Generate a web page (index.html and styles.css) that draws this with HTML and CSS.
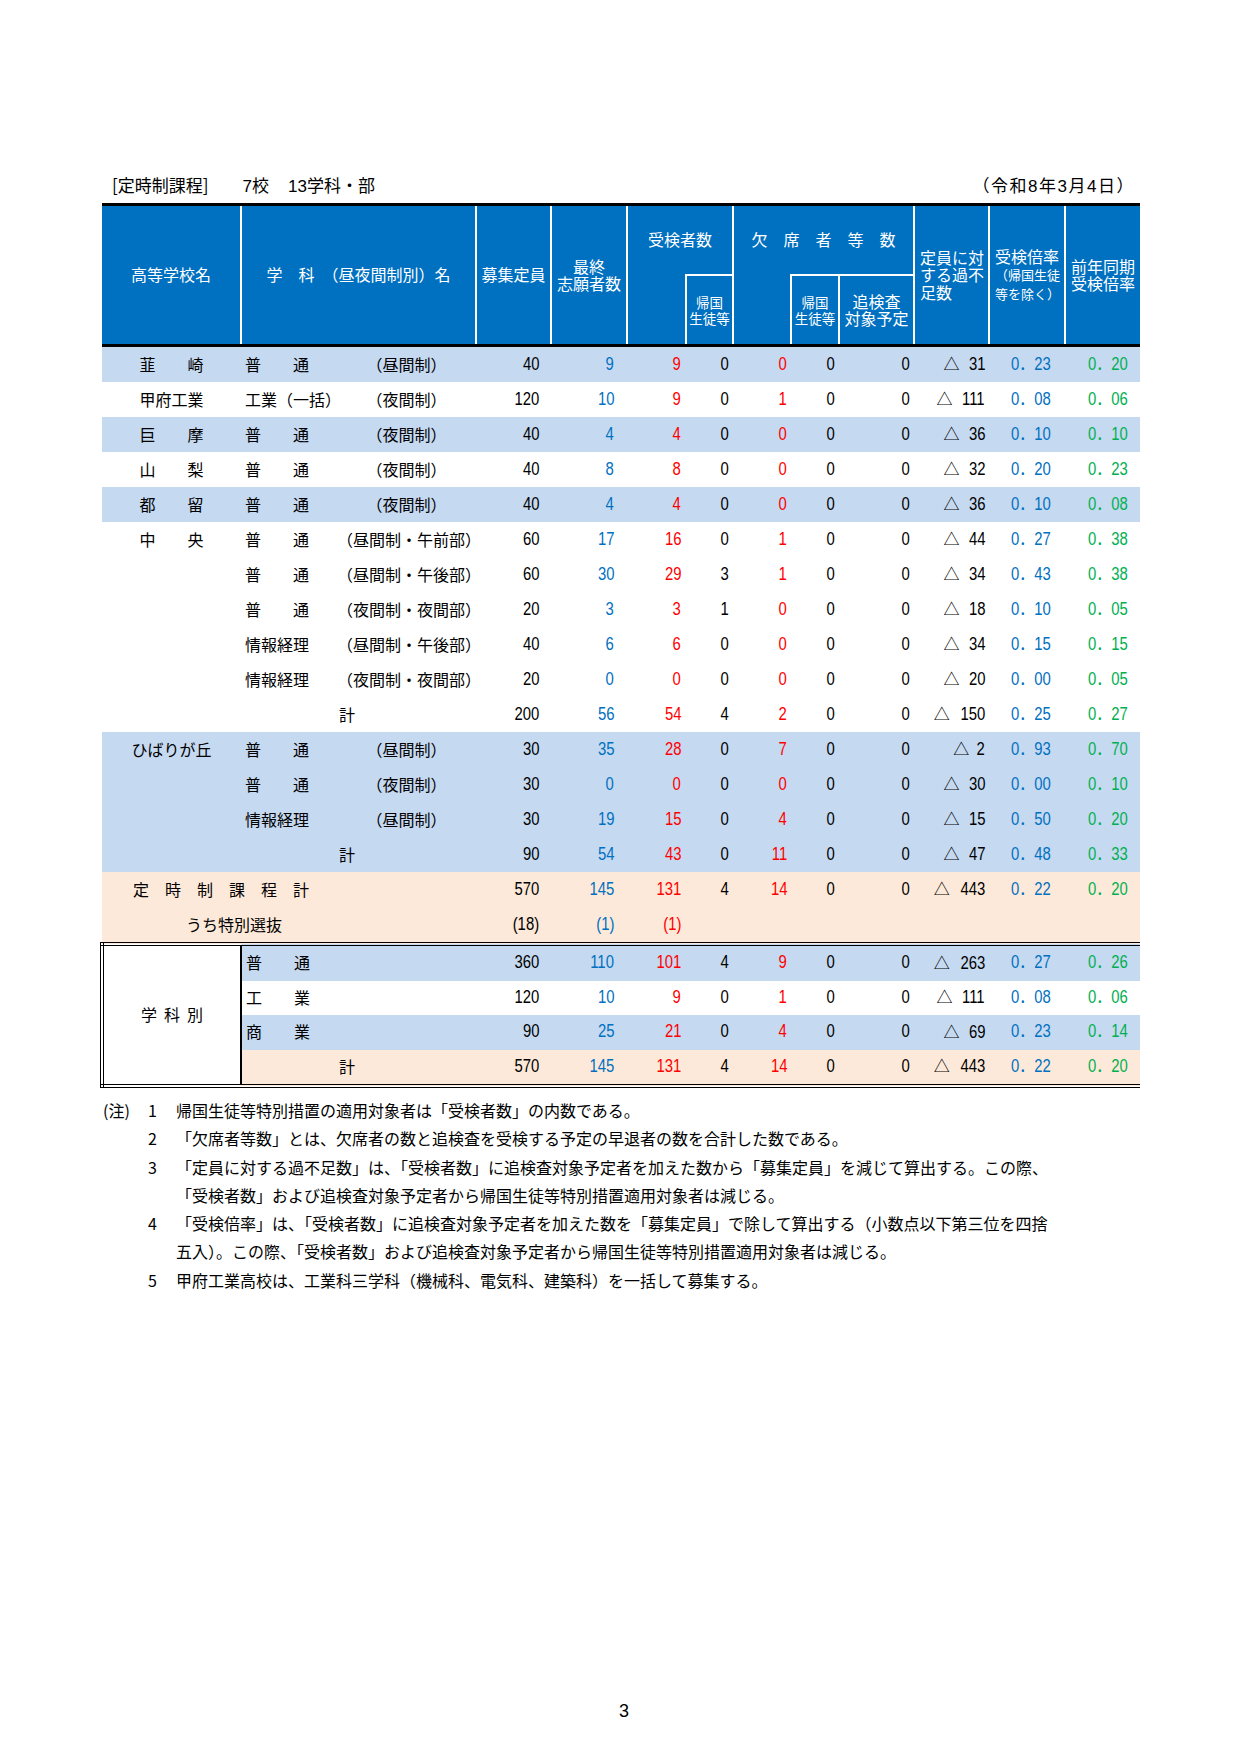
FILE: index.html
```html
<!DOCTYPE html>
<html lang="ja">
<head>
<meta charset="utf-8">
<title>定時制課程 受検状況</title>
<link rel="stylesheet" href="styles.css">
</head>
<body>
<div class="page">
  <div class="title">
    <div class="title-left"><span>[定時制課程]</span><span class="tl-a"><span class="d">7</span>校</span><span class="tl-b"><span class="d">13</span>学科・部</span></div>
    <div class="title-right">（令和<span class="d">8</span>年<span class="d">3</span>月<span class="d">4</span>日）</div>
  </div>

  <table class="t">
    <colgroup>
      <col class="w139"><col class="w96"><col class="w139"><col class="w75"><col class="w76"><col class="w59"><col class="w47"><col class="w58"><col class="w48"><col class="w75"><col class="w75"><col class="w76"><col class="w75">
    </colgroup>
    <thead>
      <tr class="ha">
        <th rowspan="2" class="first hb-bot">高等学校名</th>
        <th rowspan="2" colspan="2" class="hb-bot">学　科　（昼夜間制別）名</th>
        <th rowspan="2" class="hb-bot">募集定員</th>
        <th rowspan="2" class="hb-bot">最終<br>志願者数</th>
        <th colspan="2" class="grp">受検者数</th>
        <th colspan="3" class="grp">欠　席　者　等　数</th>
        <th rowspan="2" class="hb-bot left">定員に対<br>する過不<br>足数</th>
        <th rowspan="2" class="hb-bot left">受検倍率<br><span class="sm">（帰国生徒<br>等を除く）</span></th>
        <th rowspan="2" class="hb-bot last">前年同期<br>受検倍率</th>
      </tr>
      <tr class="hb">
        <th class="blank"></th>
        <th class="sub"><span class="sm2">帰国<br>生徒等</span></th>
        <th class="blank"></th>
        <th class="sub"><span class="sm2">帰国<br>生徒等</span></th>
        <th class="sub">追検査<br>対象予定</th>
      </tr>
    </thead>
    <tbody>
      <tr class="b">
        <td class="nm">韮　　崎</td><td class="ka">普　　通</td><td class="sei">（昼間制）</td>
        <td class="n c4"><span class="v">40</span></td><td class="n c5"><span class="v">9</span></td><td class="n c6"><span class="v">9</span></td><td class="n c7"><span class="v">0</span></td><td class="n c8"><span class="v">0</span></td><td class="n c9"><span class="v">0</span></td><td class="n c10"><span class="v">0</span></td><td class="n c11"><span class="tri">△</span><span class="v">31</span></td><td class="n c12"><span class="v">0．23</span></td><td class="n c13"><span class="v">0．20</span></td>
      </tr>
      <tr class="w">
        <td class="nm">甲府工業</td><td class="ka">工業（一括）</td><td class="sei">（夜間制）</td>
        <td class="n c4"><span class="v">120</span></td><td class="n c5"><span class="v">10</span></td><td class="n c6"><span class="v">9</span></td><td class="n c7"><span class="v">0</span></td><td class="n c8"><span class="v">1</span></td><td class="n c9"><span class="v">0</span></td><td class="n c10"><span class="v">0</span></td><td class="n c11"><span class="tri">△</span><span class="v">111</span></td><td class="n c12"><span class="v">0．08</span></td><td class="n c13"><span class="v">0．06</span></td>
      </tr>
      <tr class="b">
        <td class="nm">巨　　摩</td><td class="ka">普　　通</td><td class="sei">（夜間制）</td>
        <td class="n c4"><span class="v">40</span></td><td class="n c5"><span class="v">4</span></td><td class="n c6"><span class="v">4</span></td><td class="n c7"><span class="v">0</span></td><td class="n c8"><span class="v">0</span></td><td class="n c9"><span class="v">0</span></td><td class="n c10"><span class="v">0</span></td><td class="n c11"><span class="tri">△</span><span class="v">36</span></td><td class="n c12"><span class="v">0．10</span></td><td class="n c13"><span class="v">0．10</span></td>
      </tr>
      <tr class="w">
        <td class="nm">山　　梨</td><td class="ka">普　　通</td><td class="sei">（夜間制）</td>
        <td class="n c4"><span class="v">40</span></td><td class="n c5"><span class="v">8</span></td><td class="n c6"><span class="v">8</span></td><td class="n c7"><span class="v">0</span></td><td class="n c8"><span class="v">0</span></td><td class="n c9"><span class="v">0</span></td><td class="n c10"><span class="v">0</span></td><td class="n c11"><span class="tri">△</span><span class="v">32</span></td><td class="n c12"><span class="v">0．20</span></td><td class="n c13"><span class="v">0．23</span></td>
      </tr>
      <tr class="b">
        <td class="nm">都　　留</td><td class="ka">普　　通</td><td class="sei">（夜間制）</td>
        <td class="n c4"><span class="v">40</span></td><td class="n c5"><span class="v">4</span></td><td class="n c6"><span class="v">4</span></td><td class="n c7"><span class="v">0</span></td><td class="n c8"><span class="v">0</span></td><td class="n c9"><span class="v">0</span></td><td class="n c10"><span class="v">0</span></td><td class="n c11"><span class="tri">△</span><span class="v">36</span></td><td class="n c12"><span class="v">0．10</span></td><td class="n c13"><span class="v">0．08</span></td>
      </tr>
      <tr class="w">
        <td class="nm">中　　央</td><td class="ka">普　　通</td><td class="sei">（昼間制・午前部）</td>
        <td class="n c4"><span class="v">60</span></td><td class="n c5"><span class="v">17</span></td><td class="n c6"><span class="v">16</span></td><td class="n c7"><span class="v">0</span></td><td class="n c8"><span class="v">1</span></td><td class="n c9"><span class="v">0</span></td><td class="n c10"><span class="v">0</span></td><td class="n c11"><span class="tri">△</span><span class="v">44</span></td><td class="n c12"><span class="v">0．27</span></td><td class="n c13"><span class="v">0．38</span></td>
      </tr>
      <tr class="w">
        <td class="nm"></td><td class="ka">普　　通</td><td class="sei">（昼間制・午後部）</td>
        <td class="n c4"><span class="v">60</span></td><td class="n c5"><span class="v">30</span></td><td class="n c6"><span class="v">29</span></td><td class="n c7"><span class="v">3</span></td><td class="n c8"><span class="v">1</span></td><td class="n c9"><span class="v">0</span></td><td class="n c10"><span class="v">0</span></td><td class="n c11"><span class="tri">△</span><span class="v">34</span></td><td class="n c12"><span class="v">0．43</span></td><td class="n c13"><span class="v">0．38</span></td>
      </tr>
      <tr class="w">
        <td class="nm"></td><td class="ka">普　　通</td><td class="sei">（夜間制・夜間部）</td>
        <td class="n c4"><span class="v">20</span></td><td class="n c5"><span class="v">3</span></td><td class="n c6"><span class="v">3</span></td><td class="n c7"><span class="v">1</span></td><td class="n c8"><span class="v">0</span></td><td class="n c9"><span class="v">0</span></td><td class="n c10"><span class="v">0</span></td><td class="n c11"><span class="tri">△</span><span class="v">18</span></td><td class="n c12"><span class="v">0．10</span></td><td class="n c13"><span class="v">0．05</span></td>
      </tr>
      <tr class="w">
        <td class="nm"></td><td class="ka">情報経理</td><td class="sei">（昼間制・午後部）</td>
        <td class="n c4"><span class="v">40</span></td><td class="n c5"><span class="v">6</span></td><td class="n c6"><span class="v">6</span></td><td class="n c7"><span class="v">0</span></td><td class="n c8"><span class="v">0</span></td><td class="n c9"><span class="v">0</span></td><td class="n c10"><span class="v">0</span></td><td class="n c11"><span class="tri">△</span><span class="v">34</span></td><td class="n c12"><span class="v">0．15</span></td><td class="n c13"><span class="v">0．15</span></td>
      </tr>
      <tr class="w">
        <td class="nm"></td><td class="ka">情報経理</td><td class="sei">（夜間制・夜間部）</td>
        <td class="n c4"><span class="v">20</span></td><td class="n c5"><span class="v">0</span></td><td class="n c6"><span class="v">0</span></td><td class="n c7"><span class="v">0</span></td><td class="n c8"><span class="v">0</span></td><td class="n c9"><span class="v">0</span></td><td class="n c10"><span class="v">0</span></td><td class="n c11"><span class="tri">△</span><span class="v">20</span></td><td class="n c12"><span class="v">0．00</span></td><td class="n c13"><span class="v">0．05</span></td>
      </tr>
      <tr class="w">
        <td class="nm"></td><td class="ka"></td><td class="sei kei">計</td>
        <td class="n c4"><span class="v">200</span></td><td class="n c5"><span class="v">56</span></td><td class="n c6"><span class="v">54</span></td><td class="n c7"><span class="v">4</span></td><td class="n c8"><span class="v">2</span></td><td class="n c9"><span class="v">0</span></td><td class="n c10"><span class="v">0</span></td><td class="n c11"><span class="tri">△</span><span class="v">150</span></td><td class="n c12"><span class="v">0．25</span></td><td class="n c13"><span class="v">0．27</span></td>
      </tr>
      <tr class="b">
        <td class="nm">ひばりが丘</td><td class="ka">普　　通</td><td class="sei">（昼間制）</td>
        <td class="n c4"><span class="v">30</span></td><td class="n c5"><span class="v">35</span></td><td class="n c6"><span class="v">28</span></td><td class="n c7"><span class="v">0</span></td><td class="n c8"><span class="v">7</span></td><td class="n c9"><span class="v">0</span></td><td class="n c10"><span class="v">0</span></td><td class="n c11"><span class="tri">△</span><span class="v">2</span></td><td class="n c12"><span class="v">0．93</span></td><td class="n c13"><span class="v">0．70</span></td>
      </tr>
      <tr class="b">
        <td class="nm"></td><td class="ka">普　　通</td><td class="sei">（夜間制）</td>
        <td class="n c4"><span class="v">30</span></td><td class="n c5"><span class="v">0</span></td><td class="n c6"><span class="v">0</span></td><td class="n c7"><span class="v">0</span></td><td class="n c8"><span class="v">0</span></td><td class="n c9"><span class="v">0</span></td><td class="n c10"><span class="v">0</span></td><td class="n c11"><span class="tri">△</span><span class="v">30</span></td><td class="n c12"><span class="v">0．00</span></td><td class="n c13"><span class="v">0．10</span></td>
      </tr>
      <tr class="b">
        <td class="nm"></td><td class="ka">情報経理</td><td class="sei">（昼間制）</td>
        <td class="n c4"><span class="v">30</span></td><td class="n c5"><span class="v">19</span></td><td class="n c6"><span class="v">15</span></td><td class="n c7"><span class="v">0</span></td><td class="n c8"><span class="v">4</span></td><td class="n c9"><span class="v">0</span></td><td class="n c10"><span class="v">0</span></td><td class="n c11"><span class="tri">△</span><span class="v">15</span></td><td class="n c12"><span class="v">0．50</span></td><td class="n c13"><span class="v">0．20</span></td>
      </tr>
      <tr class="b">
        <td class="nm"></td><td class="ka"></td><td class="sei kei">計</td>
        <td class="n c4"><span class="v">90</span></td><td class="n c5"><span class="v">54</span></td><td class="n c6"><span class="v">43</span></td><td class="n c7"><span class="v">0</span></td><td class="n c8"><span class="v">11</span></td><td class="n c9"><span class="v">0</span></td><td class="n c10"><span class="v">0</span></td><td class="n c11"><span class="tri">△</span><span class="v">47</span></td><td class="n c12"><span class="v">0．48</span></td><td class="n c13"><span class="v">0．33</span></td>
      </tr>
      <tr class="p">
        <td colspan="3" class="total">定　時　制　課　程　計</td>
        <td class="n c4"><span class="v">570</span></td><td class="n c5"><span class="v">145</span></td><td class="n c6"><span class="v">131</span></td><td class="n c7"><span class="v">4</span></td><td class="n c8"><span class="v">14</span></td><td class="n c9"><span class="v">0</span></td><td class="n c10"><span class="v">0</span></td><td class="n c11"><span class="tri">△</span><span class="v">443</span></td><td class="n c12"><span class="v">0．22</span></td><td class="n c13"><span class="v">0．20</span></td>
      </tr>
      <tr class="p">
        <td colspan="3" class="special">うち特別選抜</td>
        <td class="n c4"><span class="v">(18)</span></td><td class="n c5"><span class="v">(1)</span></td><td class="n c6"><span class="v">(1)</span></td><td class="n c7"></td><td class="n c8"></td><td class="n c9"></td><td class="n c10"></td><td class="n c11"></td><td class="n c12"></td><td class="n c13"></td>
      </tr>
    </tbody>
    <tbody class="dept">
      <tr class="b first-row">
        <td rowspan="4" class="dept-label">学 科 別</td><td class="ka">普　　通</td><td class="sei"></td>
        <td class="n c4"><span class="v">360</span></td><td class="n c5"><span class="v">110</span></td><td class="n c6"><span class="v">101</span></td><td class="n c7"><span class="v">4</span></td><td class="n c8"><span class="v">9</span></td><td class="n c9"><span class="v">0</span></td><td class="n c10"><span class="v">0</span></td><td class="n c11"><span class="tri">△</span><span class="v">263</span></td><td class="n c12"><span class="v">0．27</span></td><td class="n c13"><span class="v">0．26</span></td>
      </tr>
      <tr class="w">
        <td class="ka">工　　業</td><td class="sei"></td>
        <td class="n c4"><span class="v">120</span></td><td class="n c5"><span class="v">10</span></td><td class="n c6"><span class="v">9</span></td><td class="n c7"><span class="v">0</span></td><td class="n c8"><span class="v">1</span></td><td class="n c9"><span class="v">0</span></td><td class="n c10"><span class="v">0</span></td><td class="n c11"><span class="tri">△</span><span class="v">111</span></td><td class="n c12"><span class="v">0．08</span></td><td class="n c13"><span class="v">0．06</span></td>
      </tr>
      <tr class="b">
        <td class="ka">商　　業</td><td class="sei"></td>
        <td class="n c4"><span class="v">90</span></td><td class="n c5"><span class="v">25</span></td><td class="n c6"><span class="v">21</span></td><td class="n c7"><span class="v">0</span></td><td class="n c8"><span class="v">4</span></td><td class="n c9"><span class="v">0</span></td><td class="n c10"><span class="v">0</span></td><td class="n c11"><span class="tri">△</span><span class="v">69</span></td><td class="n c12"><span class="v">0．23</span></td><td class="n c13"><span class="v">0．14</span></td>
      </tr>
      <tr class="p last-row">
        <td class="ka"></td><td class="sei kei">計</td>
        <td class="n c4"><span class="v">570</span></td><td class="n c5"><span class="v">145</span></td><td class="n c6"><span class="v">131</span></td><td class="n c7"><span class="v">4</span></td><td class="n c8"><span class="v">14</span></td><td class="n c9"><span class="v">0</span></td><td class="n c10"><span class="v">0</span></td><td class="n c11"><span class="tri">△</span><span class="v">443</span></td><td class="n c12"><span class="v">0．22</span></td><td class="n c13"><span class="v">0．20</span></td>
      </tr>
    </tbody>
  </table>

  <div class="notes">
    <div class="note"><span class="lab">(注)</span><span class="no">1</span><span class="txt">帰国生徒等特別措置の適用対象者は「受検者数」の内数である。</span></div>
    <div class="note"><span class="lab"></span><span class="no">2</span><span class="txt">「欠席者等数」とは、欠席者の数と追検査を受検する予定の早退者の数を合計した数である。</span></div>
    <div class="note"><span class="lab"></span><span class="no">3</span><span class="txt">「定員に対する過不足数」は、「受検者数」に追検査対象予定者を加えた数から「募集定員」を減じて算出する。この際、</span></div>
    <div class="note"><span class="lab"></span><span class="no"></span><span class="txt">「受検者数」および追検査対象予定者から帰国生徒等特別措置適用対象者は減じる。</span></div>
    <div class="note"><span class="lab"></span><span class="no">4</span><span class="txt">「受検倍率」は、「受検者数」に追検査対象予定者を加えた数を「募集定員」で除して算出する（小数点以下第三位を四捨</span></div>
    <div class="note"><span class="lab"></span><span class="no"></span><span class="txt">五入）。この際、「受検者数」および追検査対象予定者から帰国生徒等特別措置適用対象者は減じる。</span></div>
    <div class="note"><span class="lab"></span><span class="no">5</span><span class="txt">甲府工業高校は、工業科三学科（機械科、電気科、建築科）を一括して募集する。</span></div>
  </div>

  <div class="pageno">3</div>
</div>
</body>
</html>
```

FILE: styles.css
```css
html, body {
  margin: 0;
  padding: 0;
  background: #ffffff;
}

body {
  font-family: "Noto Sans CJK JP", "Noto Sans", sans-serif;
  color: #000000;
  font-size: 16px;
}

.page {
  width: 1240px;
  padding-top: 174px;
}

/* ---------- title line ---------- */
.title {
  margin-left: 100px;
  width: 1038px;
  height: 22px;
  line-height: 22px;
  display: flex;
  justify-content: space-between;
  margin-bottom: 7px;
  font-size: 17px;
}

.title-left {
  padding-left: 12px;
  display: flex;
}

.tl-a { margin-left: 34px; }
.tl-b { margin-left: 19px; }

.title-right {
  padding-right: 3px;
  letter-spacing: 1.5px;
}

.d {
  font-family: "Liberation Sans", sans-serif;
  font-size: 17px;
}

/* ---------- table ---------- */
.t {
  margin-left: 100px;
  width: 1038px;
  table-layout: fixed;
  border-collapse: collapse;
}

.w139 { width: 139px; }
.w96 { width: 96px; }
.w75 { width: 75px; }
.w76 { width: 76px; }
.w59 { width: 59px; }
.w47 { width: 47px; }
.w58 { width: 58px; }
.w48 { width: 48px; }

.t th {
  background: #0070c0;
  color: #ffffff;
  font-weight: normal;
  font-size: 16px;
  line-height: 17.5px;
  padding: 0;
  border: 2px solid #ffffff;
  text-align: center;
  vertical-align: middle;
  white-space: nowrap;
}

.t tr.ha th {
  border-top: 3px solid #000000;
  height: 68px;
}

.t tr.hb th {
  height: 68px;
  border-bottom: 3px solid #000000;
}

.t th.hb-bot {
  border-bottom: 3px solid #000000;
}

.t th.first { border-left: none; }
.t th.last { border-right: none; }

.t th.grp {
  border-bottom: none;
}

.t th.blank {
  border-top: none;
}

.t th.left {
  text-align: left;
  padding-left: 5px;
}

.t th .sm {
  font-size: 13px;
  line-height: 17.5px;
}

.t th .sm2 {
  font-size: 13.5px;
  line-height: 16px;
  display: inline-block;
}

/* body cells */
.t td {
  padding: 0 0 2px 0;
  height: 33px;
  font-size: 16px;
  line-height: 20px;
  vertical-align: middle;
  white-space: nowrap;
}

.t tr.b td { background: #c5d9f1; }
.t tr.w td { background: #ffffff; }
.t tr.p td { background: #fde9d9; }

.t td.nm { text-align: center; }
.t td.ka { text-align: left; padding-left: 4px; }
.t td.sei { text-align: center; }
.t td.sei.kei { text-align: left; padding-left: 2px; }

.t td.total { padding-left: 31px; }
.t td.special { padding-left: 84px; }

.t td.n {
  text-align: right;
  font-family: "Liberation Sans", "Noto Sans CJK JP", sans-serif;
  font-size: 17.5px;
}

.v {
  display: inline-block;
  transform: scaleX(0.85);
  transform-origin: 100% 50%;
}

.t td.c4 { padding-right: 12px; }
.t td.c5 { padding-right: 13px; color: #0070c0; }
.t td.c6 { padding-right: 5px; color: #ff0000; }
.t td.c7 { padding-right: 4px; }
.t td.c8 { padding-right: 4px; color: #ff0000; }
.t td.c9 { padding-right: 4px; }
.t td.c10 { padding-right: 4px; }
.t td.c11 { padding-right: 4px; }
.t td.c12 { padding-right: 14px; color: #0070c0; }
.t td.c13 { padding-right: 12px; color: #00b050; }

.tri {
  font-family: "Noto Sans CJK JP", sans-serif;
  font-size: 16px;
  margin-right: 6px;
}

/* 学科別 section */
.t tbody.dept td {
  height: 32.5px;
}

.t tbody.dept tr.first-row td {
  border-top: 4px double #000000;
}

.t tbody.dept tr.last-row td {
  border-bottom: 4px double #000000;
}

.t td.dept-label {
  background: #ffffff !important;
  text-align: center;
  word-spacing: 3.5px;
  border-left: 4px double #000000;
  border-right: 2px solid #000000;
  border-bottom: 4px double #000000;
}

/* ---------- notes ---------- */
.notes {
  margin-top: 8px;
  margin-left: 103px;
  font-size: 16px;
  line-height: 28.3px;
}

.note {
  display: flex;
  white-space: nowrap;
}

.note .lab {
  width: 44px;
  flex: none;
}

.note .no {
  width: 28px;
  flex: none;
  padding-left: 1px;
}

.note .txt {
  flex: none;
}

/* ---------- page number ---------- */
.pageno {
  margin-top: 407px;
  padding-left: 8px;
  text-align: center;
  font-family: "Liberation Sans", sans-serif;
  font-size: 18px;
  line-height: 20px;
}
```
